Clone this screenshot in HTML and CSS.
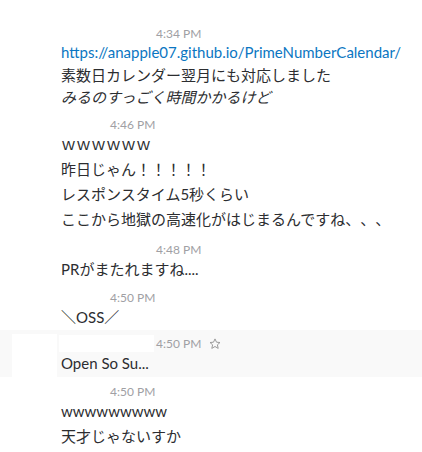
FILE: index.html
```html
<!DOCTYPE html>
<html lang="ja">
<head>
<meta charset="utf-8">
<title>Slack</title>
<link rel="stylesheet" href="styles.css">
</head>
<body>
<div class="feed">
  <div class="msg g1">
    <div class="gutter"></div>
    <div class="content">
      <div class="head"><span class="name name-long"></span><span class="time">4:34 PM</span></div>
      <div class="line tight"><a class="link" href="#">https://anapple07.github.io/PrimeNumberCalendar/</a></div>
      <div class="line tight">素数日カレンダー翌月にも対応しました</div>
      <div class="line tight italic">みるのすっごく時間かかるけど</div>
    </div>
  </div>
  <div class="msg g2">
    <div class="gutter"></div>
    <div class="content">
      <div class="head"><span class="name name-short"></span><span class="time">4:46 PM</span></div>
      <div class="line">ｗｗｗｗｗｗ</div>
      <div class="line">昨日じゃん！！！！！</div>
      <div class="line">レスポンスタイム5秒くらい</div>
      <div class="line">ここから地獄の高速化がはじまるんですね、、、</div>
    </div>
  </div>
  <div class="msg g3">
    <div class="gutter"></div>
    <div class="content">
      <div class="head"><span class="name name-long"></span><span class="time">4:48 PM</span></div>
      <div class="line">PRがまたれますね....</div>
    </div>
  </div>
  <div class="msg g4">
    <div class="gutter"></div>
    <div class="content">
      <div class="head"><span class="name name-short"></span><span class="time">4:50 PM</span></div>
      <div class="line">＼OSS／</div>
    </div>
  </div>
  <div class="msg g5 hover">
    <div class="gutter"><div class="avatar"></div></div>
    <div class="content">
      <div class="head"><span class="name name-long name-box"></span><span class="time">4:50 PM</span>
        <svg class="star" viewBox="0 0 12 12" width="12" height="12"><path d="M6 0.9 L7.5 4.2 L11 4.5 L8.4 6.8 L9.2 10.4 L6 8.5 L2.8 10.4 L3.6 6.8 L1 4.5 L4.5 4.2 Z" fill="none" stroke="#9a9a9a" stroke-width="1" stroke-linejoin="round"/></svg>
      </div>
      <div class="line">Open So Su...</div>
    </div>
  </div>
  <div class="msg g6">
    <div class="gutter"></div>
    <div class="content">
      <div class="head"><span class="name name-short"></span><span class="time">4:50 PM</span></div>
      <div class="line">wwwwwwwww</div>
      <div class="line">天才じゃないすか</div>
    </div>
  </div>
</div>
</body>
</html>
```

FILE: styles.css
```css
html, body {
  margin: 0;
  padding: 0;
  background: #ffffff;
}

body {
  font-family: Lato, "Noto Sans CJK JP", sans-serif;
  color: #2c2d30;
  font-size: 15px;
  text-spacing-trim: space-all;
}

.feed {
  padding-top: 19px;
}

.msg {
  display: flex;
  padding: 8px 0 1px;
}

.gutter {
  width: 61px;
  flex: none;
  position: relative;
}

.content {
  flex: 1;
  min-width: 0;
}

.head {
  display: flex;
  align-items: center;
  height: 14px;
  line-height: 14px;
}

.name {
  display: inline-block;
  height: 17px;
  flex: none;
}

.name-long {
  width: 95px;
}

.name-short {
  width: 49px;
}

.time {
  font-size: 12px;
  color: #a0a0a4;
  white-space: nowrap;
}

.star {
  margin-left: 8px;
  display: block;
}

.line {
  line-height: 25px;
  white-space: nowrap;
}

.line.tight {
  line-height: 22.5px;
}

.italic {
  font-style: italic;
}

.link {
  color: #0b76c2;
  text-decoration: none;
}

.g3 {
  padding-top: 10px;
}

.g4 {
  padding-bottom: 0;
}

.hover {
  background: #f9f9f9;
  padding-top: 7px;
}

.name-box {
  background: #ffffff;
  margin-left: -2px;
  margin-right: 2px;
}

.avatar {
  position: absolute;
  left: 12px;
  right: 4px;
  top: -3px;
  bottom: -1px;
  background: #ffffff;
}
```
